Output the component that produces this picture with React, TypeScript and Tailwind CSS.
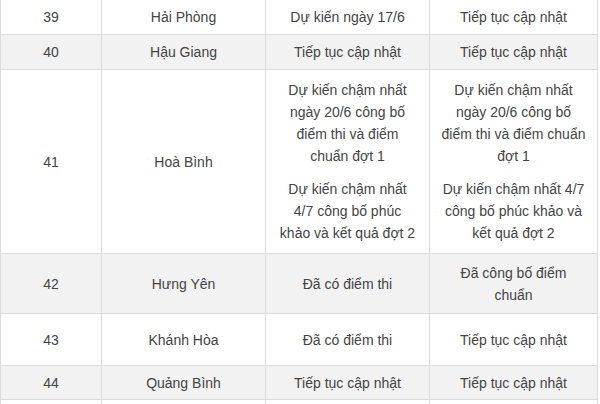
import React from "react";

type Row = {
  n: string;
  name: string;
  c3: React.ReactNode;
  c4: React.ReactNode;
  h: string;
  gray: boolean;
};

const P = ({ lines }: { lines: string[] }) => (
  <p className="whitespace-nowrap">
    {lines.map((l, i) => (
      <React.Fragment key={i}>
        {l}
        {i < lines.length - 1 && <br />}
      </React.Fragment>
    ))}
  </p>
);

const rows: Row[] = [
  { n: "39", name: "Hải Phòng", c3: "Dự kiến ngày 17/6", c4: "Tiếp tục cập nhật", h: "h-[35px]", gray: false },
  { n: "40", name: "Hậu Giang", c3: "Tiếp tục cập nhật", c4: "Tiếp tục cập nhật", h: "h-[35px]", gray: true },
  {
    n: "41",
    name: "Hoà Bình",
    c3: (
      <div className="flex flex-col gap-[11px]">
        <P lines={["Dự kiến chậm nhất", "ngày 20/6 công bố", "điểm thi và điểm", "chuẩn đợt 1"]} />
        <P lines={["Dự kiến chậm nhất", "4/7 công bố phúc", "khảo và kết quả đợt 2"]} />
      </div>
    ),
    c4: (
      <div className="flex flex-col gap-[11px]">
        <P lines={["Dự kiến chậm nhất", "ngày 20/6 công bố", "điểm thi và điểm chuẩn", "đợt 1"]} />
        <P lines={["Dự kiến chậm nhất 4/7", "công bố phúc khảo và", "kết quả đợt 2"]} />
      </div>
    ),
    h: "h-[184px]",
    gray: false,
  },
  { n: "42", name: "Hưng Yên", c3: "Đã có điểm thi", c4: <P lines={["Đã công bố điểm", "chuẩn"]} />, h: "h-[60px]", gray: true },
  { n: "43", name: "Khánh Hòa", c3: "Đã có điểm thi", c4: "Tiếp tục cập nhật", h: "h-[52px]", gray: false },
  { n: "44", name: "Quảng Bình", c3: "Tiếp tục cập nhật", c4: "Tiếp tục cập nhật", h: "h-[34px]", gray: true },
  { n: "45", name: "", c3: "", c4: "", h: "h-[35px]", gray: false },
];

export default function App() {
  return (
    <div
      className="w-[600px] h-[404px] overflow-hidden bg-white text-[#444] text-[14px] leading-[22px]"
      style={{ fontFamily: '"Liberation Sans", Arial, sans-serif' }}
    >
      <div className="w-[598px] border-l border-[#dcdcdc]">
        {rows.map((r) => (
          <div
            key={r.n}
            className={`grid grid-cols-[101px_164px_164px_168px] ${r.h} ${r.gray ? "bg-[#f2f2f2]" : "bg-white"}`}
          >
            {[r.n, r.name, r.c3, r.c4].map((c, i) => (
              <div
                key={i}
                className="flex items-center justify-center text-center border-r border-b border-[#dcdcdc]"
              >
                {r.name === "" ? null : c}
              </div>
            ))}
          </div>
        ))}
      </div>
    </div>
  );
}
